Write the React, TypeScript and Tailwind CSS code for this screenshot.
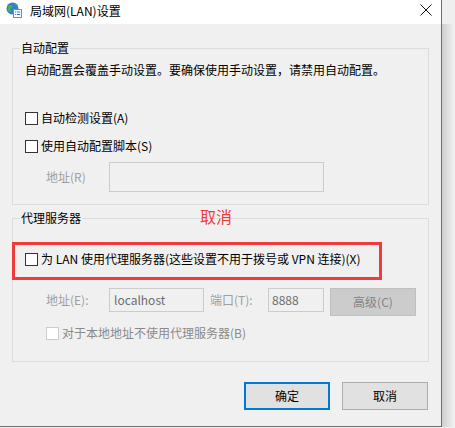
import React from 'react'

const font = { fontFamily: '"Noto Sans CJK SC", "Noto Sans", sans-serif' }

function Box({ disabled = false }: { disabled?: boolean }) {
  return (
    <span
      className={`block w-[13px] h-[13px] border bg-white shrink-0 ${
        disabled ? 'border-[#cccccc]' : 'border-[#333333]'
      }`}
    />
  )
}

function GlobeIcon() {
  return (
    <svg width="16" height="16" viewBox="0 0 16 16">
      <circle cx="6.5" cy="6.5" r="6" fill="#2f7fd6" />
      <path d="M3 3.5c1.5-.8 3-.6 3.6.6.4.9-.6 1.6-1.4 1.9-.9.3-1 1.3-.3 2 .6.6.3 1.6-.6 1.8C2.8 10 1.6 8.7 1.5 7 1.4 5.6 2 4.2 3 3.5z" fill="#4caf50" />
      <path d="M8.5 1.2c1.3.3 2.6 1.2 3.3 2.4-.8.3-1.9.2-2.5-.5-.4-.5-.6-1.2-.8-1.9z" fill="#4caf50" />
      <rect x="7.5" y="7.5" width="8" height="8" fill="#ffffff" stroke="#7a8ca8" strokeWidth="1" />
      <rect x="9" y="9.5" width="1.2" height="1" fill="#2f7fd6" />
      <rect x="11" y="9.5" width="3.2" height="1" fill="#2f7fd6" />
      <rect x="9" y="12" width="1.2" height="1" fill="#2f7fd6" />
      <rect x="11" y="12" width="3.2" height="1" fill="#2f7fd6" />
    </svg>
  )
}

export default function App() {
  return (
    <div className="w-[455px] h-[428px] overflow-hidden bg-[#f0f0f0] text-[12px] leading-[16px] text-black" style={font}>
      <div className="flex h-[427px]">
        <div className="relative w-[442px] flex flex-col border-r border-b border-[#6f6f6f]">
          {/* title bar */}
          <div className="h-[24px] bg-white flex items-center shrink-0">
            <div className="ml-[6px] mt-[-4px]">
              <GlobeIcon />
            </div>
            <span className="ml-[8px] mt-[-2px]">局域网(LAN)设置</span>
            <svg className="ml-auto mr-[9px] mt-[-5px]" width="12" height="12" viewBox="0 0 12 12">
              <path d="M0.5 0.5L11.5 11.5M11.5 0.5L0.5 11.5" stroke="#111" strokeWidth="1" />
            </svg>
          </div>

          {/* body */}
          <div className="flex-1 bg-[#f0f0f0] px-[12px]">
            <fieldset className="mt-[16px] border border-[#dcdcdc] pb-[12px]">
              <legend className="ml-[7px] px-[1px]">自动配置</legend>
              <p className="pl-[12px] mt-[6px]">自动配置会覆盖手动设置。要确保使用手动设置，请禁用自动配置。</p>
              <label className="flex items-center pl-[12px] mt-[32px]">
                <Box />
                <span className="ml-[3px]">自动检测设置(A)</span>
              </label>
              <label className="flex items-center pl-[12px] mt-[12px]">
                <Box />
                <span className="ml-[3px]">使用自动配置脚本(S)</span>
              </label>
              <div className="flex items-center pl-[33px] mt-[8px]">
                <span className="w-[63px] text-[#a0a0a0]">地址(R)</span>
                <div className="w-[215px] h-[30px] border border-[#cccccc] bg-[#f0f0f0]" />
              </div>
            </fieldset>

            <fieldset className="mt-[5px] border border-[#dcdcdc] pb-[20px]">
              <legend className="ml-[7px] px-[1px]">代理服务器</legend>
              <label className="flex items-center pl-[12px] mt-[25px]">
                <Box />
                <span className="ml-[3px]">为 LAN 使用代理服务器(这些设置不用于拨号或 VPN 连接)(X)</span>
              </label>
              <div className="flex items-start pl-[33px] mt-[21px]">
                <span className="w-[63px] h-[24px] flex items-center text-[#a0a0a0]">地址(E):</span>
                <div className="w-[95px] h-[24px] border border-[#cccccc] bg-[#f0f0f0] flex items-center pl-[4px] text-[#6d6d6d]">
                  localhost
                </div>
                <span className="ml-[6px] w-[58px] h-[24px] flex items-center text-[#a0a0a0]">端口(T):</span>
                <div className="w-[56px] h-[24px] border border-[#cccccc] bg-[#f0f0f0] flex items-center pl-[3px] text-[#6d6d6d]">
                  8888
                </div>
                <div className="ml-[6px] w-[86px] h-[28px] border border-[#bfbfbf] bg-[#cccccc] flex items-center justify-center text-[#838383]">
                  高级(C)
                </div>
              </div>
              <label className="flex items-center pl-[33px] mt-[9px]">
                <Box disabled />
                <span className="ml-[3px] text-[#8a8a8a]">对于本地地址不使用代理服务器(B)</span>
              </label>
            </fieldset>

            <div className="flex justify-end gap-[12px] mt-[20px] pr-[1px]">
              <button className="w-[86px] h-[28px] border-2 border-[#0078d7] bg-[#e1e1e1]">确定</button>
              <button className="w-[86px] h-[28px] border border-[#adadad] bg-[#e1e1e1]">取消</button>
            </div>
          </div>

          {/* annotation overlay */}
          <span className="absolute left-[200px] top-[206px] text-[16px] leading-[20px] text-[#ef3b3b]">取消</span>
          <div className="absolute left-[12px] top-[242px] w-[370px] h-[38px] border-[3px] border-[#ef3b3b]" />
        </div>
        <div className="flex-1 flex flex-col">
          <div className="h-[24px] bg-[#efefef]" />
          <div className="flex-1 bg-gradient-to-r from-[#cfcfcf] to-[#f3f3f3]" />
        </div>
      </div>
      <div className="pl-[22px] pt-[0px] text-[12px] leading-[16px]">局域网设置(L)</div>
    </div>
  )
}
